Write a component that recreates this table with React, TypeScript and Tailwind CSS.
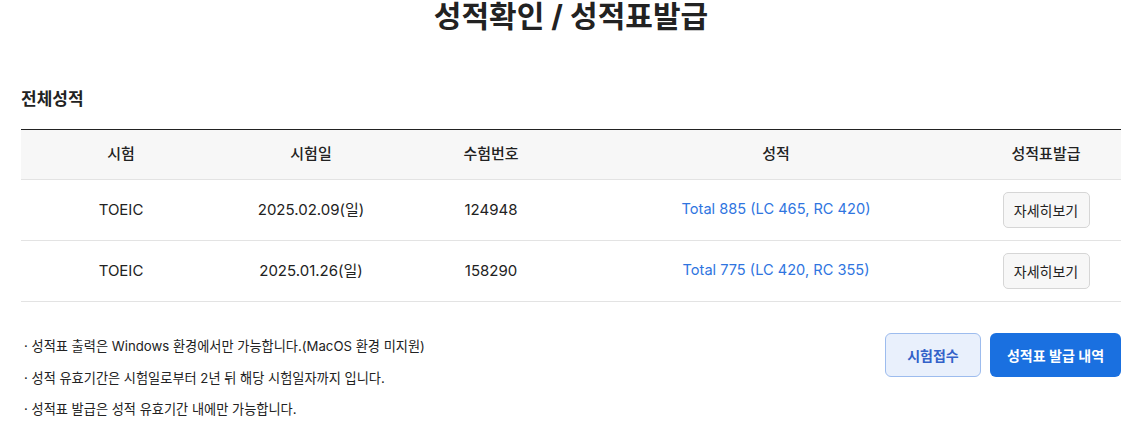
import React from "react";

const rows = [
  { exam: "TOEIC", date: "2025.02.09(일)", no: "124948", score: "Total 885 (LC 465, RC 420)" },
  { exam: "TOEIC", date: "2025.01.26(일)", no: "158290", score: "Total 775 (LC 420, RC 355)" },
];

export default function App() {
  return (
    <div
      className="w-[1131px] h-[439px] bg-white text-[#222] overflow-hidden"
      style={{ fontFamily: 'Inter, "Noto Sans CJK KR", sans-serif' }}
    >
      <div className="pl-[21px] pr-[10px]">
        <h1 className="text-center text-[30px] font-bold leading-[30px] mt-[1px] text-[#222]">
          성적확인 / 성적표발급
        </h1>
        <h2 className="mt-[57px] text-[17px] font-bold leading-[22px]">전체성적</h2>
        <table className="w-full mt-[19px] border-t border-[#222] border-collapse text-[15px]">
          <colgroup>
            <col className="w-[200px]" />
            <col className="w-[180px]" />
            <col className="w-[180px]" />
            <col />
            <col className="w-[150px]" />
          </colgroup>
          <thead>
            <tr className="bg-[#f7f7f7] border-b border-[#e3e3e3] h-[50px]">
              <th className="font-medium">시험</th>
              <th className="font-medium">시험일</th>
              <th className="font-medium">수험번호</th>
              <th className="font-medium">성적</th>
              <th className="font-medium">성적표발급</th>
            </tr>
          </thead>
          <tbody>
            {rows.map((r, i) => (
              <tr key={i} className="border-b border-[#e3e3e3] h-[61px] text-center">
                <td>{r.exam}</td>
                <td>{r.date}</td>
                <td>{r.no}</td>
                <td className="text-[#2f75df] text-[14.6px]">{r.score}</td>
                <td>
                  <button className="w-[87px] h-[36px] rounded-[5px] border border-[#d6d6d6] bg-[#f7f7f7] text-[14px] text-[#222]">
                    자세히보기
                  </button>
                </td>
              </tr>
            ))}
          </tbody>
        </table>
        <div className="flex justify-between mt-[31px]">
          <ul className="text-[13.2px] leading-[16px] flex flex-col gap-[15.5px] pl-[3px] pt-[5px] text-[#222]">
            <li>· 성적표 출력은 Windows 환경에서만 가능합니다.(MacOS 환경 미지원)</li>
            <li>· 성적 유효기간은 시험일로부터 2년 뒤 해당 시험일자까지 입니다.</li>
            <li>· 성적표 발급은 성적 유효기간 내에만 가능합니다.</li>
          </ul>
          <div className="flex gap-[9px]">
            <button className="w-[96px] h-[44px] rounded-[6px] border border-[#9dbcee] bg-[#e9f0fc] text-[#3361c9] text-[14px] font-semibold">
              시험접수
            </button>
            <button className="w-[131px] h-[44px] rounded-[6px] bg-[#1a70e0] text-white text-[14px] font-semibold">
              성적표 발급 내역
            </button>
          </div>
        </div>
      </div>
    </div>
  );
}
